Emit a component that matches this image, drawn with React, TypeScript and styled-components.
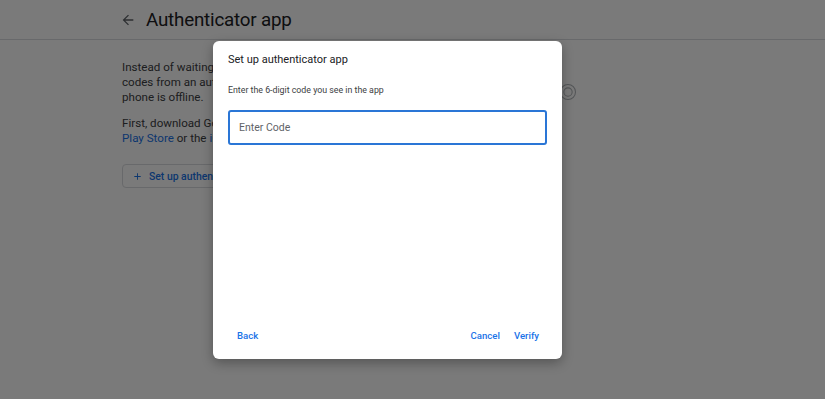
import styled, { createGlobalStyle } from "styled-components";

const GlobalStyle = createGlobalStyle`
  html, body {
    margin: 0;
    padding: 0;
    background: #ffffff;
    font-family: Roboto, "Noto Sans", Arial, sans-serif;
  }
`;

const Page = styled.div`
  position: relative;
  width: 825px;
  height: 399px;
  overflow: hidden;
  background: #ffffff;
`;

const Header = styled.header`
  display: flex;
  align-items: center;
  gap: 10px;
  height: 40px;
  padding-left: 120px;
  border-bottom: 1px solid #dadce0;
  box-sizing: border-box;
`;

const BackIcon = styled.svg`
  width: 16px;
  height: 16px;
  color: #5f6368;
`;

const PageTitle = styled.h1`
  margin: 0;
  font-size: 18.8px;
  font-weight: 400;
  color: #202124;
  letter-spacing: -0.2px;
`;

const Content = styled.div`
  display: flex;
  gap: 6px;
  padding: 20px 0 0 122px;
`;

const TextColumn = styled.div`
  width: 430px;
`;

const Paragraph = styled.p`
  margin: 0 0 11px;
  font-size: 11.6px;
  line-height: 15px;
  color: #3c4043;
`;

const Link = styled.span`
  color: #1a73e8;
`;

const OutlineButton = styled.div`
  display: flex;
  align-items: center;
  gap: 6px;
  width: 170px;
  height: 24px;
  margin-top: 18px;
  padding-left: 9px;
  box-sizing: border-box;
  border: 1px solid #dadce0;
  border-radius: 4px;
  font-size: 10.4px;
  font-weight: 500;
  color: #1a73e8;
`;

const HelpIcon = styled.svg`
  width: 20px;
  height: 20px;
  margin-top: 22px;
  color: #b0b4b8;
`;

const Scrim = styled.div`
  position: absolute;
  inset: 0;
  display: flex;
  align-items: center;
  padding-left: 213px;
  background: rgba(0, 0, 0, 0.52);
`;

const Dialog = styled.div`
  display: flex;
  flex-direction: column;
  width: 349px;
  height: 318px;
  padding: 11px 15px 12px;
  box-sizing: border-box;
  background: #ffffff;
  border-radius: 6px;
  box-shadow: 0 4px 12px rgba(0, 0, 0, 0.3);
`;

const DialogTitle = styled.h2`
  margin: 0;
  font-size: 11px;
  font-weight: 400;
  line-height: 16px;
  color: #202124;
`;

const DialogText = styled.p`
  margin: 16px 0 0;
  font-size: 8.8px;
  line-height: 12px;
  color: #3c4043;
`;

const CodeInput = styled.input`
  margin-top: 14px;
  height: 35px;
  padding: 0 9px;
  box-sizing: border-box;
  border: 2px solid #2a76d6;
  border-radius: 3px;
  outline: none;
  font-family: Roboto, Arial, sans-serif;
  font-size: 10.5px;
  color: #202124;

  &::placeholder {
    color: #5f6368;
  }
`;

const Footer = styled.div`
  display: flex;
  align-items: center;
  margin-top: auto;
  padding: 0 1px 0 2px;
`;

const Spacer = styled.div`
  flex: 1;
`;

const TextButton = styled.button`
  background: none;
  border: none;
  padding: 7px 7px 6px;
  font-family: Roboto, Arial, sans-serif;
  font-size: 9.6px;
  font-weight: 500;
  color: #1a73e8;
  cursor: pointer;
`;

export default function App() {
  return (
    <Page>
      <GlobalStyle />
      <Header>
        <BackIcon viewBox="0 0 24 24" fill="currentColor">
          <path d="M20 11H7.83l5.59-5.59L12 4l-8 8 8 8 1.41-1.41L7.83 13H20v-2z" />
        </BackIcon>
        <PageTitle>Authenticator app</PageTitle>
      </Header>
      <Content>
        <TextColumn>
          <Paragraph>
            Instead of waiting for text messages, get verification
            <br />
            codes from an authenticator app. It works even if your
            <br />
            phone is offline.
          </Paragraph>
          <Paragraph>
            First, download Google Authenticator from the Google
            <br />
            <Link>Play Store</Link> or the <Link>iOS App Store</Link>.
          </Paragraph>
          <OutlineButton>
            <svg width="11" height="11" viewBox="0 0 24 24" fill="currentColor">
              <path d="M19 13h-6v6h-2v-6H5v-2h6V5h2v6h6v2z" />
            </svg>
            Set up authenticator
          </OutlineButton>
        </TextColumn>
        <HelpIcon viewBox="0 0 24 24" fill="none" stroke="currentColor" strokeWidth="1.3">
          <circle cx="12" cy="12" r="9" />
          <circle cx="12" cy="12" r="5" />
        </HelpIcon>
      </Content>
      <Scrim>
        <Dialog>
          <DialogTitle>Set up authenticator app</DialogTitle>
          <DialogText>Enter the 6-digit code you see in the app</DialogText>
          <CodeInput placeholder="Enter Code" />
          <Footer>
            <TextButton>Back</TextButton>
            <Spacer />
            <TextButton>Cancel</TextButton>
            <TextButton>Verify</TextButton>
          </Footer>
        </Dialog>
      </Scrim>
    </Page>
  );
}
